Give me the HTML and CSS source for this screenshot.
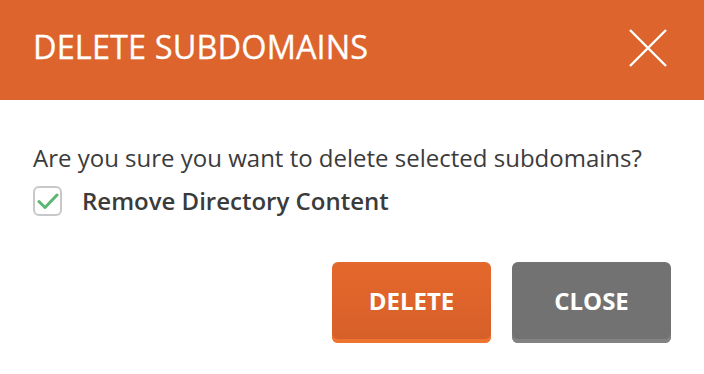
FILE: index.html
```html
<!DOCTYPE html>
<html>
<head>
<meta charset="utf-8">
<link rel="stylesheet" href="styles.css">
</head>
<body>
<div class="modal">
  <div class="header">
    <h1 class="title">DELETE SUBDOMAINS</h1>
    <button class="close-x" aria-label="Close">
      <svg width="38" height="38" viewBox="0 0 38 38"><path d="M1 1L37 37M37 1L1 37" stroke="#fff" stroke-width="2.4" fill="none"/></svg>
    </button>
  </div>
  <div class="body">
    <p class="question">Are you sure you want to delete selected subdomains?</p>
    <label class="check-row">
      <span class="checkbox">
        <svg width="22" height="18" viewBox="0 0 22 18"><path d="M2 9.5L8 15.5L20 3" stroke="#5cb772" stroke-width="3" fill="none" stroke-linecap="round" stroke-linejoin="round"/></svg>
      </span>
      <span class="check-label">Remove Directory Content</span>
    </label>
  </div>
  <div class="footer">
    <button class="btn btn-delete">DELETE</button>
    <button class="btn btn-close">CLOSE</button>
  </div>
</div>
</body>
</html>
```

FILE: styles.css
```css
* { box-sizing: border-box; }
html, body { margin: 0; padding: 0; background: #fff; }
body { font-family: "Open Sans", "Liberation Sans", sans-serif; width: 704px; height: 374px; overflow: hidden; }
.modal { width: 704px; }
.header {
  height: 100px;
  background: #dd642c;
  display: flex;
  align-items: center;
  justify-content: space-between;
  padding: 0 37px 7px 33px;
}
.title {
  margin: 0;
  color: #fff;
  font-size: 32.5px;
  font-weight: 400;
  letter-spacing: 0.1px;
  -webkit-text-stroke: 0.3px #fff;
}
.close-x {
  border: 0;
  background: none;
  padding: 0;
  display: flex;
  margin-top: 2px;
}
.body { padding: 42px 33px 0 33px; }
.question {
  margin: 0;
  font-size: 24px;
  color: #3b3b3b;
  line-height: 32px;
}
.check-row {
  display: flex;
  align-items: center;
  margin-top: 10px;
}
.checkbox {
  width: 29px;
  height: 30px;
  border: 2px solid #c8c8c8;
  border-radius: 6px;
  display: flex;
  align-items: center;
  justify-content: center;
}
.check-label {
  margin-left: 20px;
  font-size: 24px;
  font-weight: 600;
  color: #3b3b3b;
}
.footer {
  display: flex;
  justify-content: flex-end;
  gap: 21px;
  padding: 45px 33px 0 0;
}
.btn {
  width: 159px;
  height: 81px;
  border: 0;
  border-radius: 6px;
  color: #fff;
  font-family: "Open Sans", "Liberation Sans", sans-serif;
  font-size: 24px;
  font-weight: 700;
  padding: 0 0 4px 0;
}
.btn-delete {
  background: linear-gradient(#e4682c, #d65f29);
  box-shadow: inset 0 -4px 0 #ee7530;
}
.btn-close {
  background: #727272;
  box-shadow: inset 0 -4px 0 #828282;
}
```
